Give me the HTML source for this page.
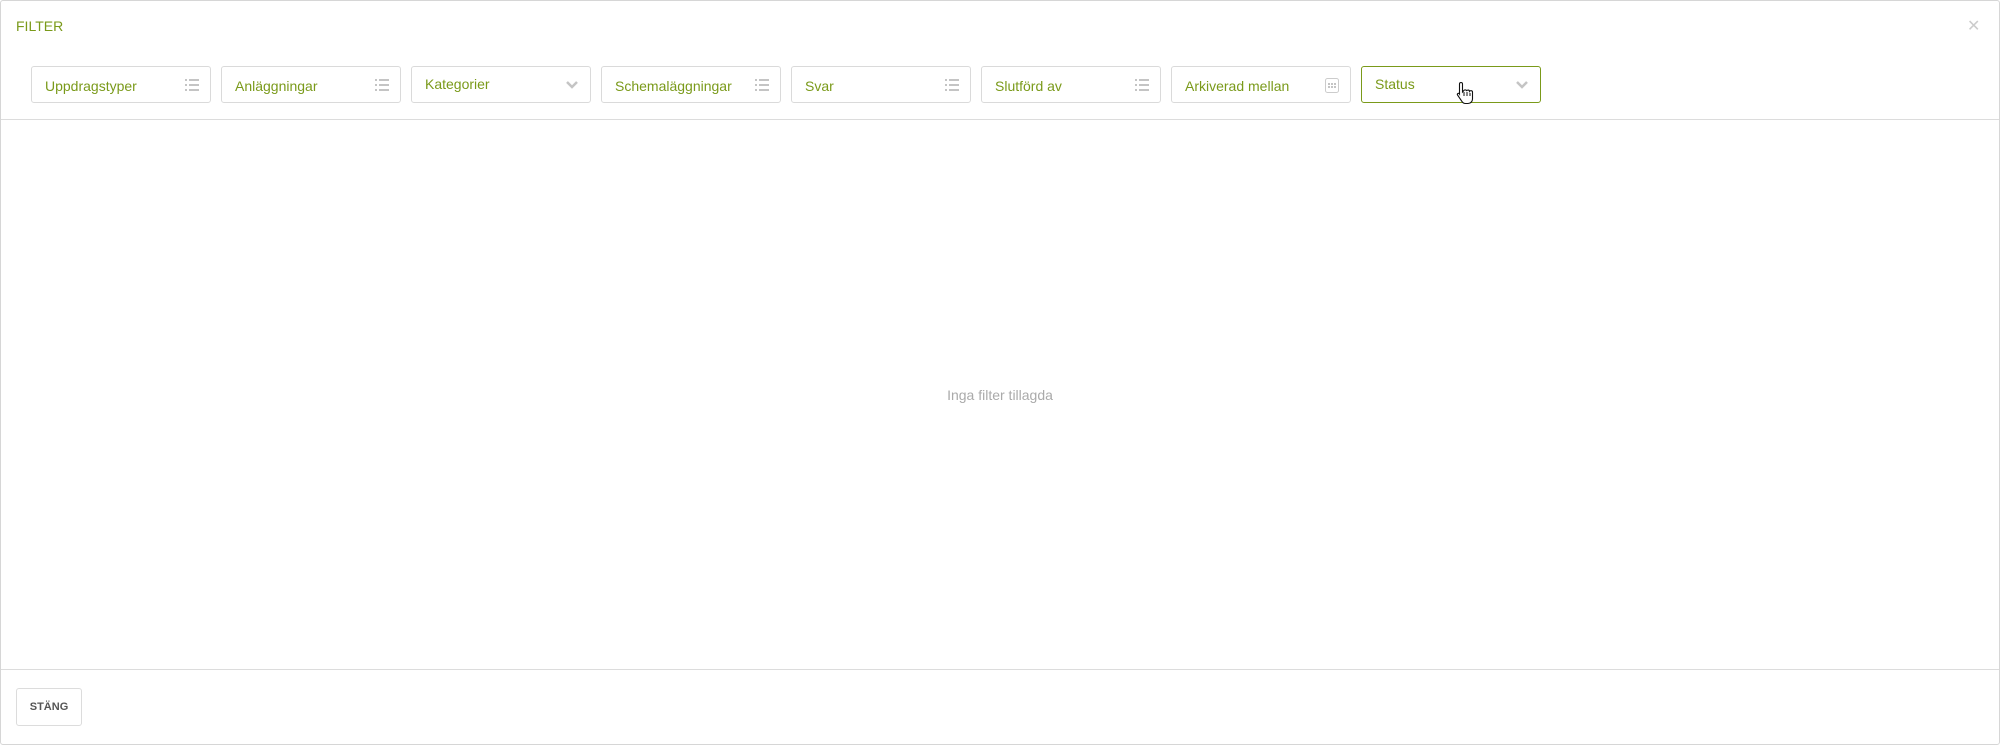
<!DOCTYPE html>
<html><head><meta charset="utf-8"><style>
*{box-sizing:border-box;margin:0;padding:0}
body{width:2000px;height:745px;background:#fff;font-family:"Liberation Sans",sans-serif;position:relative;overflow:hidden}
.frame{position:absolute;left:0;top:0;width:2000px;height:745px;border:1px solid #d6d6d6;border-radius:3px}
.title{position:absolute;left:16px;top:18px;font-size:14px;color:#7a9a1a}
.close{position:absolute;left:1967px;top:16px;font-size:16px;color:#ccc}
.hr{position:absolute;left:1px;right:1px;height:1px;background:#dcdcdc}
.box{position:absolute;top:66px;width:180px;height:37px;border:1px solid #dadada;border-radius:3px;font-size:14px;color:#7a9a1a;padding:11px 0 0 13px}
.box.act{border-color:#7a9a1a}
.ic{position:absolute;right:11px;top:11px}
.empty{position:absolute;left:0;width:2000px;top:387px;text-align:center;font-size:14px;color:#aaa}
.btn{position:absolute;left:16px;top:688px;width:66px;height:38px;border:1px solid #dcdcdc;border-radius:3px;font-size:11px;font-weight:bold;color:#555;text-align:center;line-height:36px}
</style></head><body>
<div class="frame"></div>
<div class="title">FILTER</div>
<div class="close">✕</div>
<div class="hr" style="top:119px"></div>
<div class="box" style="left:31px">Uppdragstyper<svg class="ic" width="14" height="14"><g fill="#c4c4c4"><rect x="0" y="1" width="2" height="2"/><rect x="4" y="1" width="10" height="2"/><rect x="0" y="6" width="2" height="2"/><rect x="4" y="6" width="10" height="2"/><rect x="0" y="11" width="2" height="2"/><rect x="4" y="11" width="10" height="2"/></g></svg></div>
<div class="box" style="left:221px">Anläggningar<svg class="ic" width="14" height="14"><g fill="#c4c4c4"><rect x="0" y="1" width="2" height="2"/><rect x="4" y="1" width="10" height="2"/><rect x="0" y="6" width="2" height="2"/><rect x="4" y="6" width="10" height="2"/><rect x="0" y="11" width="2" height="2"/><rect x="4" y="11" width="10" height="2"/></g></svg></div>
<div class="box" style="left:411px;padding-top:9px">Kategorier<svg class="ic" width="14" height="14"><path d="M2 4l5 5 5-5" stroke="#c4c4c4" stroke-width="2.5" fill="none"/></svg></div>
<div class="box" style="left:601px">Schemaläggningar<svg class="ic" width="14" height="14"><g fill="#c4c4c4"><rect x="0" y="1" width="2" height="2"/><rect x="4" y="1" width="10" height="2"/><rect x="0" y="6" width="2" height="2"/><rect x="4" y="6" width="10" height="2"/><rect x="0" y="11" width="2" height="2"/><rect x="4" y="11" width="10" height="2"/></g></svg></div>
<div class="box" style="left:791px">Svar<svg class="ic" width="14" height="14"><g fill="#c4c4c4"><rect x="0" y="1" width="2" height="2"/><rect x="4" y="1" width="10" height="2"/><rect x="0" y="6" width="2" height="2"/><rect x="4" y="6" width="10" height="2"/><rect x="0" y="11" width="2" height="2"/><rect x="4" y="11" width="10" height="2"/></g></svg></div>
<div class="box" style="left:981px">Slutförd av<svg class="ic" width="14" height="14"><g fill="#c4c4c4"><rect x="0" y="1" width="2" height="2"/><rect x="4" y="1" width="10" height="2"/><rect x="0" y="6" width="2" height="2"/><rect x="4" y="6" width="10" height="2"/><rect x="0" y="11" width="2" height="2"/><rect x="4" y="11" width="10" height="2"/></g></svg></div>
<div class="box" style="left:1171px">Arkiverad mellan<svg class="ic" width="14" height="16" style="top:10px"><rect x="0.5" y="1.5" width="13" height="14" rx="2" fill="none" stroke="#ccc"/><g fill="#c4c4c4"><rect x="3" y="6" width="2" height="2"/><rect x="6" y="6" width="2" height="2"/><rect x="9" y="6" width="2" height="2"/><rect x="3" y="9" width="2" height="2"/><rect x="6" y="9" width="2" height="2"/><rect x="9" y="9" width="2" height="2"/></g></svg></div>
<div class="box act" style="left:1361px;padding-top:9px">Status<svg class="ic" width="14" height="14"><path d="M2 4l5 5 5-5" stroke="#c4c4c4" stroke-width="2.5" fill="none"/></svg>
<svg style="position:absolute;left:94px;top:14px" width="18" height="24"><path d="M5 1.5c1 0 1.5.6 1.5 1.5v8l1-1c.5-1.5 3-1.5 3 0 .5-1.3 3-1.3 3 .3.7-1 3-.8 3 .7V18c0 2.5-2 4.5-4.5 4.5H9.5c-1.5 0-2.7-.7-3.5-2L1.5 14c-.6-1 .7-2.3 1.8-1.3L3.5 13V3c0-1 .5-1.5 1.5-1.5z" fill="#fff" stroke="#111" stroke-width="1.1"/><path d="M8 11v4M11 11v4M14 12v3" stroke="#111" stroke-width="1"/></svg></div>
<div class="empty">Inga filter tillagda</div>
<div class="hr" style="top:669px"></div>
<div class="btn">STÄNG</div>
</body></html>
